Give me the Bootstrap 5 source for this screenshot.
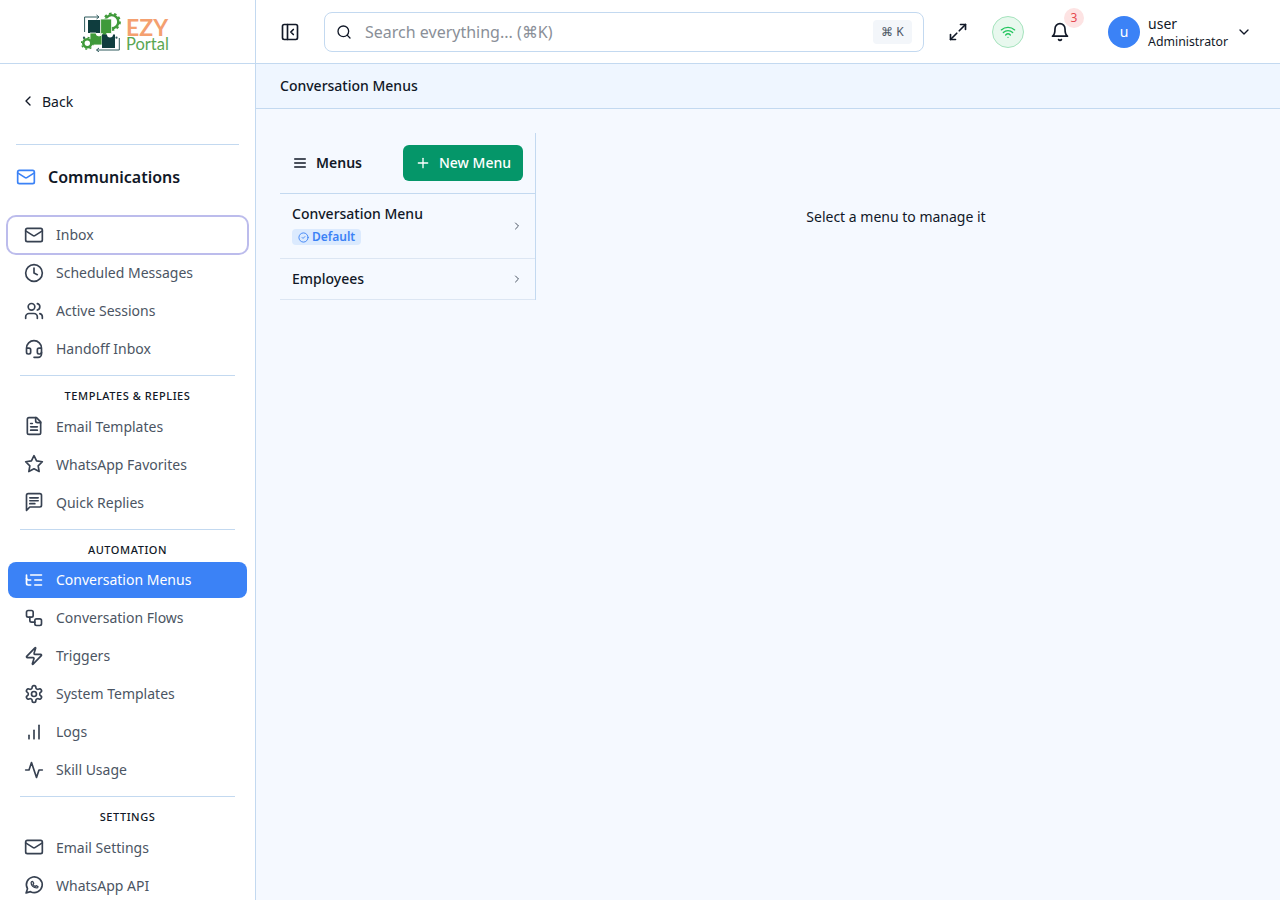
<!DOCTYPE html>
<html lang="en">
  <head>
    <meta charset="UTF-8" />
    <meta name="viewport" content="width=device-width, initial-scale=1.0" />
    <title>Conversation Menus - EZY Portal</title>
    <link href="https://cdn.jsdelivr.net/npm/bootstrap@5.3.0/dist/css/bootstrap.min.css" rel="stylesheet" />
    <style>
      :root { --line: #c3d9f0; --ink: #111827; --muted: #4b5563; }
      body { font-family: "Noto Sans", sans-serif; font-size: 14px; color: var(--ink); background: #f5f9ff; height: 900px; overflow: hidden; }
      .ico { width: 20px; height: 20px; fill: none; stroke: currentColor; stroke-width: 2; stroke-linecap: round; stroke-linejoin: round; flex: none; }
      .ico-16 { width: 16px; height: 16px; }
      .ico-12 { width: 12px; height: 12px; }

      .side { width: 256px; flex: none; background: #fff; border-right: 1px solid var(--line); height: 900px; overflow: hidden; }
      .side-logo { height: 64px; border-bottom: 1px solid var(--line); padding-left: 81px; gap: 4px; }
      .logo-word { font-family: "Lato", sans-serif; margin-top: 5px; }
      .logo-ezy { color: #f4a070; font-size: 23px; font-weight: 700; line-height: 20px; }
      .logo-portal { color: #5aa652; font-size: 16.5px; line-height: 15px; }
      .back-row { padding: 19px 0 0 20px; height: 80px; }
      .back-link { color: var(--ink); text-decoration: none; height: 36px; gap: 6px; }
      .side-rule { height: 1px; background: var(--line); margin: 0 16px; }
      .side-title { padding: 0 16px; height: 63.5px; }
      .side-title svg { color: #3b82f6; }
      .side-title span { font-size: 16px; font-weight: 600; margin-left: 4px; }
      .side-nav { padding: 8px 8px 0 8px; gap: 2px; }
      .side-link { display: flex; align-items: center; gap: 12px; height: 36px; padding: 0 16px; border-radius: 8px; color: var(--muted); text-decoration: none; flex: none; }
      .side-link .ico { color: #374151; }
      .side-link.is-focus { outline: 2px solid #bcbcec; outline-offset: 0; }
      .side-link.is-on { background: #3b82f6; color: #fff; }
      .side-link.is-on .ico { color: #fff; }
      .side-rule-sm { height: 1px; flex: none; background: var(--line); margin: 6.5px 12px 0 12px; }
      .side-group { font-size: 11px; line-height: 16.5px; font-weight: 500; letter-spacing: .55px; text-align: center; text-transform: uppercase; padding: 10px 0 3.5px; margin-bottom: -2px; color: var(--ink); flex: none; }

      .top-bar { height: 64px; background: #fff; border-bottom: 1px solid var(--line); padding: 0 28px 0 24px; }
      .search-box { width: 600px; height: 40px; border: 1px solid var(--line); border-radius: 8px; padding: 0 11px; margin-left: 24px; }
      .search-hint { color: #8a8f98; font-size: 16px; margin-left: 13px; }
      .search-kbd { width: 39px; height: 24px; background: #f3f6fa; border-radius: 4px; font-size: 12px; color: #4b5563; }
      .wifi-dot { width: 32px; height: 32px; border-radius: 50%; background: #e8f8ee; border: 1px solid #a5e3bd; color: #22c55e; }
      .bell-wrap { width: 20px; height: 20px; margin-left: 26px; }
      .bell-count { top: -14px; left: 14px; width: 20px; height: 20px; border-radius: 50%; background: #fde3e3; color: #e5484d; font-size: 12px; }
      .user-dot { width: 32px; height: 32px; border-radius: 50%; background: #3b82f6; color: #fff; }
      .user-text { padding-top: 2px; }
      .user-name { line-height: 17px; }
      .user-role { font-size: 12.3px; line-height: 17px; margin-top: 1px; }

      .crumb-bar { height: 45px; background: #eff6ff; border-bottom: 1px solid var(--line); padding: 0 24px 1px; font-weight: 500; }
      .work { padding: 24px; }
      .menu-pane { width: 256px; border-right: 1px solid var(--line); }
      .menu-head { height: 61px; padding: 0 12px; border-bottom: 1px solid var(--line); }
      .menu-head b { font-weight: 600; line-height: 20px; }
      .new-btn { width: 120px; height: 36px; background: #059669; border: 0; color: #fff; border-radius: 6px; font-size: 14px; font-weight: 500; line-height: 20px; --bs-btn-padding-y: 0; }
      .menu-row { padding: 0 12px; border-bottom: 1px solid #dce6f3; color: var(--ink); text-decoration: none; }
      .menu-row .ico { color: #4b5563; }
      .menu-row-tall { height: 65px; }
      .menu-row-tall > div { padding-bottom: 3px; }
      .menu-row-low { height: 41px; }
      .menu-name { font-weight: 500; line-height: 20px; }
      .tag-default { background: #dbeafe; color: #3b82f6; font-size: 12px; font-weight: 600; line-height: 16px; border-radius: 4px; padding: 0 6px; width: 69px; margin-top: 5px; gap: 3px; }
      .menu-row .tag-default .ico { color: #3b82f6; width: 11px; height: 11px; }
      .empty-note { padding-top: 73px; }
    </style>
  </head>
  <body>
    <svg width="0" height="0" class="position-absolute">
      <symbol id="i-mail" viewBox="0 0 24 24"><rect x="2" y="4" width="20" height="16" rx="2"/><path d="m22 7-8.97 5.7a1.94 1.94 0 0 1-2.06 0L2 7"/></symbol>
      <symbol id="i-clock" viewBox="0 0 24 24"><circle cx="12" cy="12" r="10"/><polyline points="12 6 12 12 16 14"/></symbol>
      <symbol id="i-users" viewBox="0 0 24 24"><path d="M16 21v-2a4 4 0 0 0-4-4H6a4 4 0 0 0-4 4v2"/><circle cx="9" cy="7" r="4"/><path d="M22 21v-2a4 4 0 0 0-3-3.87"/><path d="M16 3.13a4 4 0 0 1 0 7.75"/></symbol>
      <symbol id="i-headset" viewBox="0 0 24 24"><path d="M3 11h3a2 2 0 0 1 2 2v3a2 2 0 0 1-2 2H5a2 2 0 0 1-2-2v-5Zm0 0a9 9 0 1 1 18 0m0 0v5a2 2 0 0 1-2 2h-1a2 2 0 0 1-2-2v-3a2 2 0 0 1 2-2h3Z"/><path d="M21 16v2a4 4 0 0 1-4 4h-5"/></symbol>
      <symbol id="i-file" viewBox="0 0 24 24"><path d="M15 2H6a2 2 0 0 0-2 2v16a2 2 0 0 0 2 2h12a2 2 0 0 0 2-2V7Z"/><path d="M14 2v4a2 2 0 0 0 2 2h4"/><path d="M10 9H8"/><path d="M16 13H8"/><path d="M16 17H8"/></symbol>
      <symbol id="i-star" viewBox="0 0 24 24"><polygon points="12 2 15.09 8.26 22 9.27 17 14.14 18.18 21.02 12 17.77 5.82 21.02 7 14.14 2 9.27 8.91 8.26 12 2"/></symbol>
      <symbol id="i-reply" viewBox="0 0 24 24"><path d="M21 16a2 2 0 0 1-2 2H7l-4 4V4a2 2 0 0 1 2-2h14a2 2 0 0 1 2 2z"/><path d="M7 7h10"/><path d="M7 10.5h10"/><path d="M7 14h6"/></symbol>
      <symbol id="i-tree" viewBox="0 0 24 24"><path d="M21 12h-8"/><path d="M21 6H8"/><path d="M21 18h-8"/><path d="M3 6v4c0 1.1.9 2 2 2h3"/><path d="M3 10v6c0 1.1.9 2 2 2h3"/></symbol>
      <symbol id="i-flow" viewBox="0 0 24 24"><rect x="3" y="3" width="8" height="8" rx="2"/><path d="M7 11v4a2 2 0 0 0 2 2h4"/><rect x="13" y="13" width="8" height="8" rx="2"/></symbol>
      <symbol id="i-zap" viewBox="0 0 24 24"><path d="M4 14a1 1 0 0 1-.78-1.63l9.9-10.2a.5.5 0 0 1 .86.46l-1.92 6.02A1 1 0 0 0 13 10h7a1 1 0 0 1 .78 1.63l-9.9 10.2a.5.5 0 0 1-.86-.46l1.92-6.02A1 1 0 0 0 11 14z"/></symbol>
      <symbol id="i-gear" viewBox="0 0 24 24"><path d="M12.22 2h-.44a2 2 0 0 0-2 2v.18a2 2 0 0 1-1 1.73l-.43.25a2 2 0 0 1-2 0l-.15-.08a2 2 0 0 0-2.73.73l-.22.38a2 2 0 0 0 .73 2.73l.15.1a2 2 0 0 1 1 1.72v.51a2 2 0 0 1-1 1.74l-.15.09a2 2 0 0 0-.73 2.73l.22.38a2 2 0 0 0 2.73.73l.15-.08a2 2 0 0 1 2 0l.43.25a2 2 0 0 1 1 1.73V20a2 2 0 0 0 2 2h.44a2 2 0 0 0 2-2v-.18a2 2 0 0 1 1-1.73l.43-.25a2 2 0 0 1 2 0l.15.08a2 2 0 0 0 2.73-.73l.22-.39a2 2 0 0 0-.73-2.73l-.15-.08a2 2 0 0 1-1-1.74v-.5a2 2 0 0 1 1-1.74l.15-.09a2 2 0 0 0 .73-2.73l-.22-.38a2 2 0 0 0-2.73-.73l-.15.08a2 2 0 0 1-2 0l-.43-.25a2 2 0 0 1-1-1.73V4a2 2 0 0 0-2-2z"/><circle cx="12" cy="12" r="3"/></symbol>
      <symbol id="i-bars" viewBox="0 0 24 24"><path d="M12 20V10"/><path d="M18 20V4"/><path d="M6 20v-4"/></symbol>
      <symbol id="i-pulse" viewBox="0 0 24 24"><path d="M22 12h-4l-3 9L9 3l-3 9H2"/></symbol>
      <symbol id="i-whatsapp" viewBox="0 0 24 24"><path d="M2.5 21.5l1.7-5a9.5 9.5 0 1 1 3.6 3.5z"/><path d="M8.5 9c0 3.6 3 6.5 6.5 6.5.9 0 1.8-.6 1.8-1.5l-2.3-1.2-1 .9c-1.2-.5-2.2-1.5-2.7-2.7l.9-1-1.2-2.3c-.9 0-2 .9-2 1.8z" stroke-width="1.5"/></symbol>
      <symbol id="i-panel" viewBox="0 0 24 24"><rect x="3" y="3" width="18" height="18" rx="2"/><path d="M9 3v18"/><path d="m16 15-3-3 3-3"/></symbol>
      <symbol id="i-search" viewBox="0 0 24 24"><circle cx="11" cy="11" r="8"/><path d="m21 21-4.3-4.3"/></symbol>
      <symbol id="i-expand" viewBox="0 0 24 24"><path d="M15 3h6v6"/><path d="M9 21H3v-6"/><path d="M21 3l-7.5 7.5"/><path d="M3 21l7.5-7.5"/></symbol>
      <symbol id="i-wifi" viewBox="0 0 24 24"><path d="M12 20h.01"/><path d="M2 8.82a15 15 0 0 1 20 0"/><path d="M5 12.859a10 10 0 0 1 14 0"/><path d="M8.5 16.429a5 5 0 0 1 7 0"/></symbol>
      <symbol id="i-bell" viewBox="0 0 24 24"><path d="M6 8a6 6 0 0 1 12 0c0 7 3 9 3 9H3s3-2 3-9"/><path d="M10.3 21a1.94 1.94 0 0 0 3.4 0"/></symbol>
      <symbol id="i-down" viewBox="0 0 24 24"><path d="m6 9 6 6 6-6"/></symbol>
      <symbol id="i-left" viewBox="0 0 24 24"><path d="m15 18-6-6 6-6"/></symbol>
      <symbol id="i-right" viewBox="0 0 24 24"><path d="m9 18 6-6-6-6"/></symbol>
      <symbol id="i-menu" viewBox="0 0 24 24"><path d="M4 12h16"/><path d="M4 6h16"/><path d="M4 18h16"/></symbol>
      <symbol id="i-plus" viewBox="0 0 24 24"><path d="M5 12h14"/><path d="M12 5v14"/></symbol>
      <symbol id="i-check" viewBox="0 0 24 24"><circle cx="12" cy="12" r="10"/><path d="m9 12 2 2 4-4"/></symbol>
    </svg>

    <div class="d-flex">
      <!-- Sidebar -->
      <aside class="side">
        <div class="side-logo d-flex align-items-center">
          <svg width="41" height="40" viewBox="0 0 41 40" aria-hidden="true">
            <g fill="none" stroke="#2f5a5c" stroke-width="1">
              <path d="M3.6 20V5h14M15.5 3l2.5 2-2.5 2"/>
              <path d="M38.3 26v12H15.7M18 36l-2.5 2 2.5 2"/>
            </g>
            <!-- gears sit behind the puzzle -->
            <circle cx="30.7" cy="9.7" r="6.6" fill="#fff" stroke="#3f9a3a" stroke-width="2.4"/>
            <circle cx="30.7" cy="9.7" r="8.2" fill="none" stroke="#3f9a3a" stroke-width="2" stroke-dasharray="2.6 2.5"/>
            <!-- puzzle pieces -->
            <rect x="7" y="8" width="12.6" height="13" fill="#0f3d3e"/>
            <path d="M19.6 7h11v14.5h-5a3 3 0 0 1-6 0z" fill="#3f9a3a" stroke="#fff" stroke-width=".8"/>
            <path d="M9 21h6a3 3 0 0 0 6 0v12H9z" fill="#3f9a3a" stroke="#fff" stroke-width=".8"/>
            <path d="M21 22.5h5a3 3 0 0 0 6 0h2V36H21z" fill="#0f3d3e"/>
            <circle cx="6.3" cy="31.3" r="4" fill="#fff" stroke="#3f9a3a" stroke-width="2.6"/>
            <circle cx="6.3" cy="31.3" r="5.8" fill="none" stroke="#3f9a3a" stroke-width="1.4" stroke-dasharray="2 2.5"/>
            <circle cx="3" cy="25.7" r="1.1" fill="#2f5a5c"/>
            <circle cx="35.5" cy="25.7" r="1.1" fill="#2f5a5c"/>
          </svg>
          <div class="logo-word d-flex flex-column">
            <span class="logo-ezy">EZY</span>
            <span class="logo-portal">Portal</span>
          </div>
        </div>
        <div class="back-row">
          <a href="#" class="back-link d-inline-flex align-items-center">
            <svg class="ico ico-16"><use href="#i-left"/></svg>Back
          </a>
        </div>
        <div class="side-rule"></div>
        <div class="side-title d-flex align-items-center gap-2">
          <svg class="ico"><use href="#i-mail"/></svg><span>Communications</span>
        </div>
        <nav class="side-nav d-flex flex-column">
          <a href="#" class="side-link is-focus"><svg class="ico"><use href="#i-mail"/></svg>Inbox</a>
          <a href="#" class="side-link"><svg class="ico"><use href="#i-clock"/></svg>Scheduled Messages</a>
          <a href="#" class="side-link"><svg class="ico"><use href="#i-users"/></svg>Active Sessions</a>
          <a href="#" class="side-link"><svg class="ico"><use href="#i-headset"/></svg>Handoff Inbox</a>
          <div class="side-rule-sm"></div>
          <div class="side-group">Templates &amp; Replies</div>
          <a href="#" class="side-link"><svg class="ico"><use href="#i-file"/></svg>Email Templates</a>
          <a href="#" class="side-link"><svg class="ico"><use href="#i-star"/></svg>WhatsApp Favorites</a>
          <a href="#" class="side-link"><svg class="ico"><use href="#i-reply"/></svg>Quick Replies</a>
          <div class="side-rule-sm"></div>
          <div class="side-group">Automation</div>
          <a href="#" class="side-link is-on"><svg class="ico"><use href="#i-tree"/></svg>Conversation Menus</a>
          <a href="#" class="side-link"><svg class="ico"><use href="#i-flow"/></svg>Conversation Flows</a>
          <a href="#" class="side-link"><svg class="ico"><use href="#i-zap"/></svg>Triggers</a>
          <a href="#" class="side-link"><svg class="ico"><use href="#i-gear"/></svg>System Templates</a>
          <a href="#" class="side-link"><svg class="ico"><use href="#i-bars"/></svg>Logs</a>
          <a href="#" class="side-link"><svg class="ico"><use href="#i-pulse"/></svg>Skill Usage</a>
          <div class="side-rule-sm"></div>
          <div class="side-group">Settings</div>
          <a href="#" class="side-link"><svg class="ico"><use href="#i-mail"/></svg>Email Settings</a>
          <a href="#" class="side-link"><svg class="ico"><use href="#i-whatsapp"/></svg>WhatsApp API</a>
        </nav>
      </aside>

      <div class="flex-grow-1 d-flex flex-column">
        <!-- Top bar -->
        <header class="top-bar d-flex align-items-center">
          <svg class="ico"><use href="#i-panel"/></svg>
          <div class="search-box d-flex align-items-center">
            <svg class="ico ico-16"><use href="#i-search"/></svg>
            <span class="search-hint flex-grow-1">Search everything... (⌘K)</span>
            <span class="search-kbd d-flex align-items-center justify-content-center">⌘ K</span>
          </div>
          <svg class="ico ms-4 me-4"><use href="#i-expand"/></svg>
          <span class="wifi-dot d-flex align-items-center justify-content-center"><svg class="ico ico-16"><use href="#i-wifi"/></svg></span>
          <span class="bell-wrap d-flex position-relative me-auto">
            <svg class="ico"><use href="#i-bell"/></svg>
            <span class="bell-count position-absolute d-flex align-items-center justify-content-center">3</span>
          </span>
          <span class="user-dot d-flex align-items-center justify-content-center">u</span>
          <div class="user-text ms-2">
            <div class="user-name">user</div>
            <div class="user-role">Administrator</div>
          </div>
          <svg class="ico ico-16 ms-2"><use href="#i-down"/></svg>
        </header>

        <!-- Page title -->
        <div class="crumb-bar d-flex align-items-center">Conversation Menus</div>

        <div class="work d-flex">
          <section class="menu-pane flex-shrink-0">
            <div class="menu-head d-flex align-items-center">
              <svg class="ico ico-16"><use href="#i-menu"/></svg>
              <b class="ms-2 me-auto">Menus</b>
              <button class="btn new-btn d-flex align-items-center justify-content-center gap-2" type="button">
                <svg class="ico ico-16"><use href="#i-plus"/></svg>New Menu
              </button>
            </div>
            <a href="#" class="menu-row menu-row-tall d-flex align-items-center justify-content-between">
              <div>
                <div class="menu-name">Conversation Menu</div>
                <span class="tag-default d-flex align-items-center"><svg class="ico"><use href="#i-check"/></svg>Default</span>
              </div>
              <svg class="ico ico-12"><use href="#i-right"/></svg>
            </a>
            <a href="#" class="menu-row menu-row-low d-flex align-items-center justify-content-between">
              <div class="menu-name">Employees</div>
              <svg class="ico ico-12"><use href="#i-right"/></svg>
            </a>
          </section>
          <div class="empty-note flex-grow-1 text-center">Select a menu to manage it</div>
        </div>
      </div>
    </div>

    <script src="https://cdn.jsdelivr.net/npm/bootstrap@5.3.0/dist/js/bootstrap.bundle.min.js"></script>
  </body>
</html>
